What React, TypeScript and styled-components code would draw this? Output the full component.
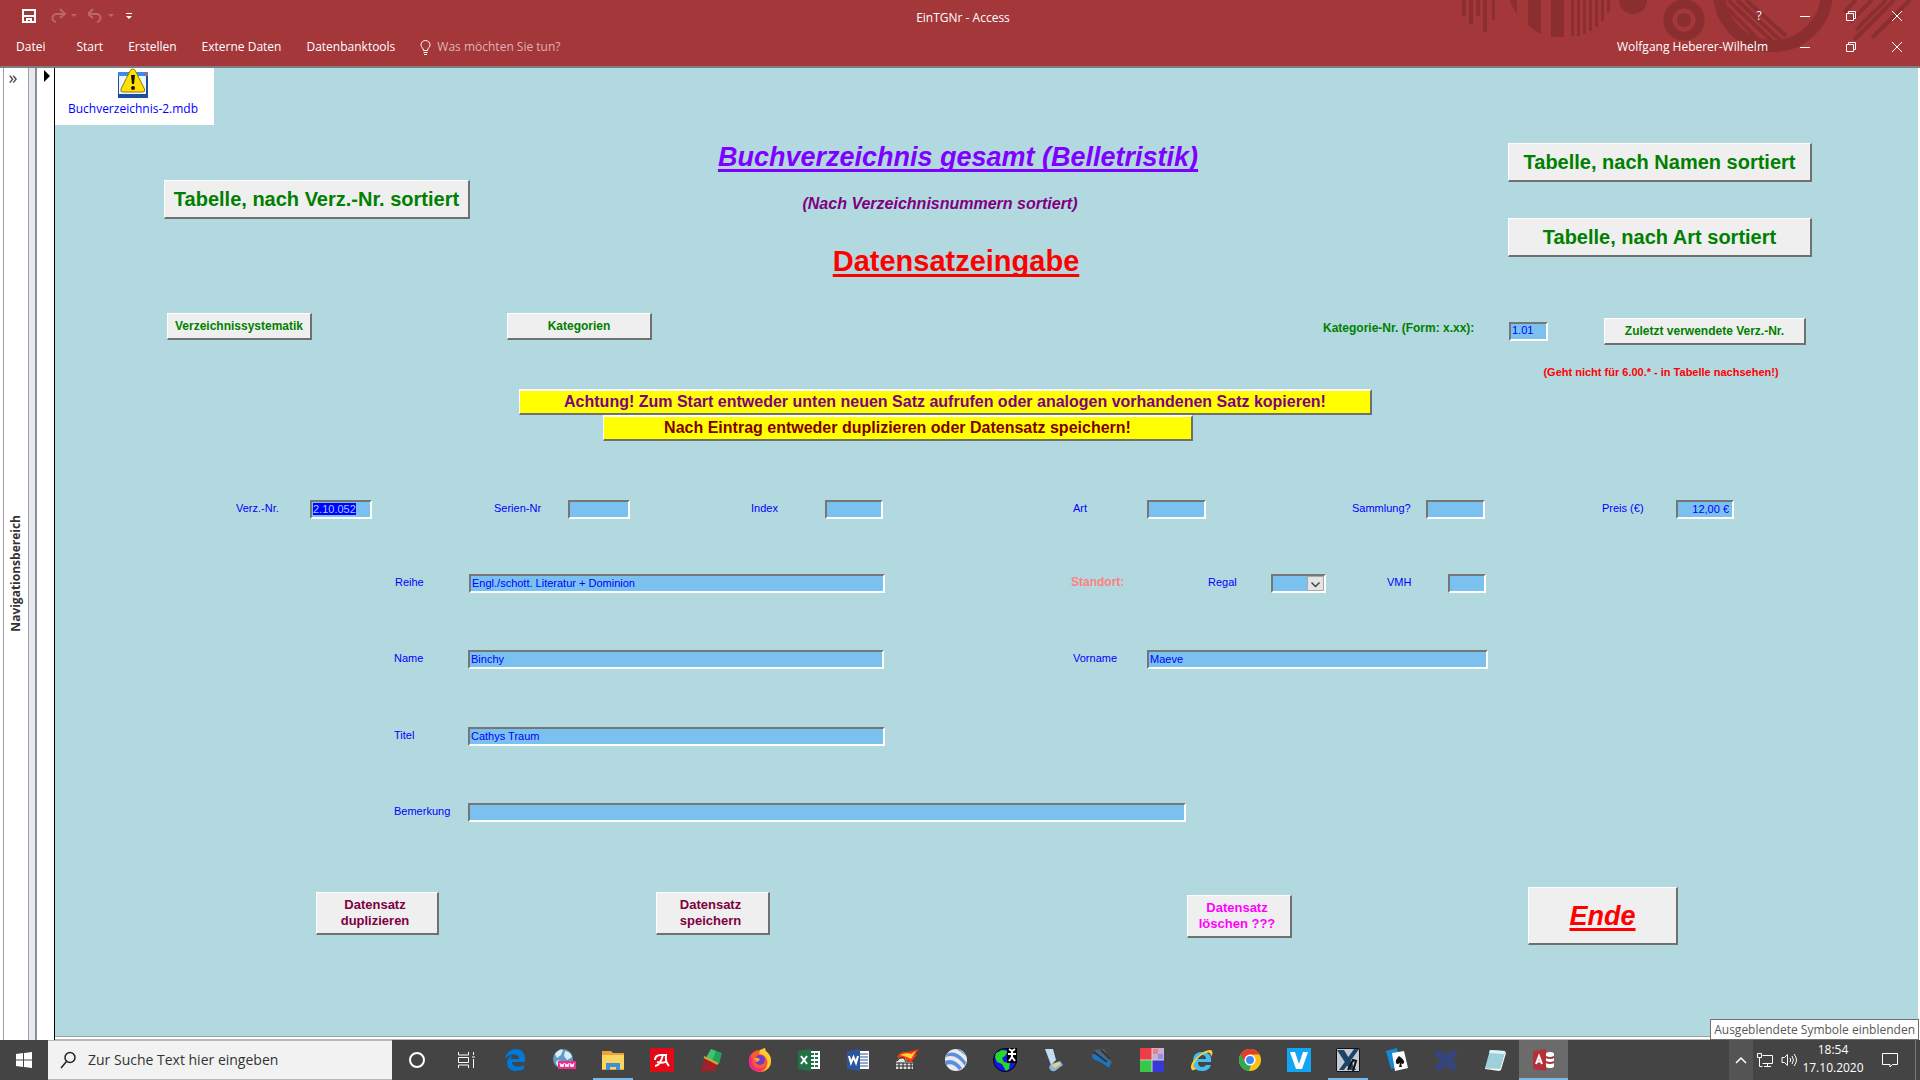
import React, { useEffect, useRef } from "react";
import styled, { createGlobalStyle } from "styled-components";

const ui = `"Open Sans", "Noto Sans", sans-serif`;
const form = `"Liberation Sans", Arial, sans-serif`;

const GlobalStyle = createGlobalStyle`
  * { box-sizing: border-box; }
  body { margin: 0; background: #fff; font-family: ${ui}; }
  button, input, select { font: inherit; }
  h1, h2, p { margin: 0; }
  svg { display: block; flex: none; }
`;

const Shell = styled.div`
  display: flex;
  flex-direction: column;
  min-height: 100vh;
`;

/* ---------- ribbon ---------- */

const Ribbon = styled.header`
  position: relative;
  background: #a4373a;
  color: #fff;
  font-size: 12px;
  line-height: 16px;
  height: 66px;
  overflow: hidden;
`;

const RibbonArt = styled.svg`
  position: absolute;
  top: 0;
  right: 0;
`;

const TitleBar = styled.div`
  position: relative;
  display: grid;
  grid-template-columns: 1fr auto 1fr;
  align-items: center;
  height: 32px;
  padding: 0 14px 0 20px;
`;

const AppTitle = styled.span`
  padding-top: 4px;
`;

const TabBar = styled.nav`
  position: relative;
  display: flex;
  align-items: center;
  height: 30px;
  padding: 0 14px 0 16px;
  gap: 25px;
`;

const QuickAccess = styled.div`
  display: flex;
  align-items: center;
  gap: 10px;
`;

const IconButton = styled.button`
  display: flex;
  align-items: center;
  justify-content: center;
  gap: 4px;
  border: 0;
  padding: 0;
  background: none;
  color: inherit;
`;

const WindowButtons = styled.div`
  display: flex;
  justify-content: flex-end;
  align-items: center;
  gap: 28px;

  ${IconButton} {
    width: 18px;
    height: 18px;
  }
`;

const Tab = styled.button`
  border: 0;
  padding: 0;
  background: none;
  color: #fff;
`;

const FileTab = styled(Tab)`
  padding-right: 6px;
`;

const TellMe = styled.label`
  display: flex;
  align-items: center;
  gap: 6px;
  flex: 1;

  input {
    width: 160px;
    border: 0;
    padding: 0;
    outline: 0;
    background: none;
    color: #fff;
  }
  input::placeholder {
    color: #dfb2b3;
    opacity: 1;
  }
`;

/* ---------- work area ---------- */

const Workspace = styled.div`
  display: flex;
  flex: 1;
  border-top: 2px solid #7d7f80;
  padding-right: 2px;
`;

const NavigationPane = styled.aside`
  display: flex;
  flex-direction: column;
  align-items: center;
  width: 26px;
  margin-left: 3px;
  border-left: 1px solid #a0a0a8;
  border-right: 1px solid #a0a0a8;
  color: #333;
`;

const ExpandButton = styled.button`
  width: 100%;
  height: 38px;
  border: 0;
  padding: 0 6px 20px 0;
  background: none;
  color: #444;
  font-size: 18px;
  line-height: 16px;
`;

const VerticalCaption = styled.span`
  margin: auto 0;
  writing-mode: vertical-rl;
  transform: rotate(180deg);
  font-size: 12px;
  line-height: 16px;
  font-weight: 700;
`;

const Splitter = styled.div`
  width: 8px;
  background: #e6e9f0;
  border-right: 2px solid #8a8d92;
`;

const RecordSelector = styled.div`
  width: 18px;
  padding: 2px 0 0 7px;
  background: #fff;
  border-right: 1px solid #000;
`;

const FormColumn = styled.div`
  display: flex;
  flex-direction: column;
  flex: 1;
  min-width: 0;
`;

const FormArea = styled.main`
  flex: 1;
  background: #b2d9e0;
  color: #0000ff;
  font-family: ${form};
  font-size: 11px;
  line-height: 16px;
`;

const StatusEdge = styled.div`
  height: 4px;
  border-top: 1px solid #a0a0a0;
  border-bottom: 1px solid #b8b8b8;
  background: #fff;
`;

const LinkedFile = styled.div`
  display: flex;
  flex-direction: column;
  align-items: center;
  justify-content: space-between;
  width: 159px;
  height: 57px;
  padding: 0 3px 8px 0;
  background: #fff;
  font-family: ${ui};
  font-size: 12px;
  line-height: 16px;
`;

const Row = styled.div<{ $cols: string; $top: number }>`
  display: grid;
  grid-template-columns: ${(p) => p.$cols};
  align-items: start;
  margin-top: ${(p) => p.$top}px;
`;

const Stack = styled.div<{ $gap: number }>`
  display: flex;
  flex-direction: column;
  gap: ${(p) => p.$gap}px;
`;

const Centered = styled.div<{ $height: number }>`
  display: flex;
  align-items: center;
  height: ${(p) => p.$height}px;
`;

const RaisedButton = styled.button`
  width: 100%;
  padding: 0;
  background: #efefef;
  border-style: solid;
  border-width: 1px 2px 2px 1px;
  border-color: #fff #707070 #707070 #fff;
  font-weight: 700;
  white-space: nowrap;
`;

const TableButton = styled(RaisedButton)`
  height: 39px;
  color: #008000;
  font-size: 20px;
  line-height: 24px;
`;

const SmallButton = styled(RaisedButton)`
  height: 27px;
  color: #008000;
  font-size: 12px;
  line-height: 16px;
`;

const ActionButton = styled(RaisedButton)<{ $color: string }>`
  height: 43px;
  padding-right: 4px;
  color: ${(p) => p.$color};
  font-size: 13px;
  line-height: 16px;
`;

const ExitButton = styled(RaisedButton)`
  height: 58px;
  color: #ff0000;
  font-size: 27px;
  line-height: 32px;
  font-style: italic;
  text-decoration: underline;
  text-decoration-thickness: 3px;
  text-decoration-skip-ink: none;
  text-underline-offset: 3px;
`;

const Titles = styled.div`
  display: flex;
  flex-direction: column;
  align-items: center;
  white-space: nowrap;
  text-decoration-skip-ink: none;
  text-underline-offset: 3px;
`;

const Title = styled.h1`
  color: #8000ff;
  font-size: 27px;
  line-height: 28px;
  font-style: italic;
  text-decoration: underline;
  text-decoration-thickness: 3px;
`;

const Subtitle = styled.p`
  margin-top: 23px;
  padding-right: 36px;
  color: #800080;
  font-size: 16px;
  line-height: 20px;
  font-weight: 700;
  font-style: italic;
`;

const Mode = styled.h2`
  margin-top: 31px;
  padding-right: 4px;
  color: #ff0000;
  font-size: 29px;
  line-height: 32px;

  span {
    text-decoration: underline;
    text-decoration-thickness: 3px;
  }
`;

const Notice = styled.p<{ $color: string }>`
  height: 26px;
  background: #ffff00;
  border-style: solid;
  border-width: 2px 2px 2px 1px;
  border-color: #fff #707070 #707070 #fff;
  color: ${(p) => p.$color};
  font-size: 16px;
  line-height: 22px;
  font-weight: 700;
  text-align: center;
  white-space: nowrap;
`;

const Hint = styled.p`
  color: #ff0000;
  font-size: 11px;
  line-height: 14px;
  font-weight: 700;
  text-align: center;
  white-space: nowrap;
`;

const Label = styled.label<{ $tone?: string; $bold?: boolean }>`
  color: ${(p) => p.$tone ?? "#0000ff"};
  font-size: ${(p) => (p.$bold ? 12 : 11)}px;
  font-weight: ${(p) => (p.$bold ? 700 : 400)};
  white-space: nowrap;
`;

const Field = styled.input<{ $right?: boolean }>`
  width: 100%;
  min-width: 0;
  height: 19px;
  padding: ${(p) => (p.$right ? "0 3px 2px" : "0 1px 2px")};
  background: #7ac1f0;
  border: 2px solid;
  border-color: #767676 #fff #fff #767676;
  border-radius: 0;
  outline: 0;
  color: #0000ff;
  text-align: ${(p) => (p.$right ? "right" : "left")};

  &::selection {
    background: #0000ff;
    color: #a0d4ff;
  }
`;

const SelectBox = styled.div`
  display: flex;
  align-items: center;
  position: relative;
  height: 19px;
  background: #7ac1f0;
  border: 2px solid;
  border-color: #767676 #fff #fff #767676;

  select {
    appearance: none;
    width: 100%;
    height: 15px;
    padding: 0;
    border: 0;
    background: none;
    color: #0000ff;
  }
  svg {
    position: absolute;
    right: 0;
    top: 0;
    pointer-events: none;
  }
`;

/* ---------- taskbar ---------- */

const Taskbar = styled.footer`
  display: flex;
  height: 40px;
  background: #444;
  color: #fff;
`;

const StartButton = styled(IconButton)`
  width: 48px;
`;

const SearchBox = styled.label`
  display: flex;
  align-items: center;
  gap: 12px;
  width: 344px;
  padding-left: 12px;
  background: #f2f2f2;
  border: 1px solid #b8b8b8;
  border-width: 1px 0;

  input {
    flex: 1;
    min-width: 0;
    border: 0;
    padding: 0;
    outline: 0;
    background: none;
    font-size: 14px;
    line-height: 20px;
  }
  input::placeholder {
    color: #333;
    opacity: 1;
  }
`;

const TaskButton = styled(IconButton)<{ $open?: boolean; $active?: boolean }>`
  width: 49px;
  background: ${(p) => (p.$active ? "#6b6b6b" : "transparent")};
  background-image: ${(p) => (p.$open || p.$active ? "linear-gradient(#76b9ed, #76b9ed)" : "none")};
  background-repeat: no-repeat;
  background-position: center bottom;
  background-size: ${(p) => (p.$active ? "100%" : "40px")} 2px;
`;

const Tray = styled.div`
  position: relative;
  display: flex;
  margin-left: auto;
`;

const TrayButton = styled(IconButton)<{ $width: number; $hover?: boolean }>`
  width: ${(p) => p.$width}px;
  background: ${(p) => (p.$hover ? "#545454" : "none")};
`;

const Clock = styled.time`
  width: 64px;
  padding-top: 1px;
  text-align: center;
  font-size: 12px;
  line-height: 18px;
`;

const ShowDesktop = styled.button`
  width: 5px;
  padding: 0;
  border: 0;
  border-left: 1px solid #777;
  background: none;
`;

const Tooltip = styled.div`
  position: absolute;
  right: 1px;
  bottom: 40px;
  padding: 1px 3px;
  background: #fff;
  border: 1px solid #707070;
  color: #575757;
  font-size: 12px;
  line-height: 17px;
  white-space: nowrap;
`;

/* ---------- drawings ---------- */

const Minimize = () => (
  <svg width="10" height="10"><path d="M0 5.5h10" stroke="#fff" /></svg>
);
const Restore = () => (
  <svg width="10" height="10" fill="none" stroke="#fff">
    <path d="M.5 2.5h7v7h-7zM2.5 2.5v-2h7v7h-2" />
  </svg>
);
const Close = () => (
  <svg width="10" height="10"><path d="M0 0l10 10M10 0L0 10" stroke="#fff" /></svg>
);

const Pattern = () => (
  <RibbonArt width="480" height="66" fill="#8a2e30" aria-hidden="true">
    <path d="M22 0h4v16h-4zM29 0h4v24h-4zM36 0h4v16h-4zM43 0h4v32h-4zM52 0h3v20h-3z" />
    <path d="M70 0h7v14q-5-7-7-14zM88 0h13v34q-7-3-13-9zM111 0h13v37h-13zM131 0h3v36h-3zM137 0h3v36h-3zM143 0h3v34h-3zM149 0h3v31h-3zM155 0h3v27h-3zM161 0h3v21h-3zM167 0h3v12h-3z" />
    <path d="M179 0h28a14 14 0 0 1-28 0z" />
    <circle cx="244" cy="20" r="16" fill="none" stroke="#8a2e30" strokeWidth="9" />
    <circle cx="244" cy="20" r="7" />
    <path d="M279-8a54 54 0 0 0 108 0" fill="none" stroke="#8a2e30" strokeWidth="12" />
    <path d="M287 8l39 39M288 0l47 44M297 0l45 42M306 0l40 36" stroke="#8a2e30" strokeWidth="4" />
    <path d="M404 12l12-12M410 22l22-22M416 30l30-30M414 40l40-40M432 38l38-38" stroke="#8a2e30" strokeWidth="4" />
  </RibbonArt>
);

const TellMeBulb = () => (
  <svg width="11" height="15" fill="none" stroke="#fff">
    <path d="M3.5 10.5C3.5 8 1 7.5 1 4.8a4.5 4.3 0 0 1 9 0C10 7.500 7.500 8 7.500 10.500zM3.500 12.500h4M4 14.500h3" />
  </svg>
);

const FileIcon = () => (
  <svg width="32" height="31">
    <path d="M1 4h30v26H1z" fill="#1c4fa0" />
    <path d="M2 8h27v18H2z" fill="#eef5ff" />
    <path d="M1 4h30v4H1z" fill="#3b8be8" />
    <path d="M27 5h3v2h-3z" fill="#e8502a" />
    <path d="M15.500 1q2 0 3 2l9 18q1 3-2 3H6q-3 0-2-3l9-18q1-2 2.500-2z" fill="#ffe000" stroke="#8c7a00" />
    <path d="M14 7h4l-1 9h-2z" fill="#111" />
    <circle cx="16" cy="20" r="2" fill="#111" />
  </svg>
);

const icons: Record<string, React.ReactNode> = {
  cortana: <circle cx="12" cy="12" r="7" fill="none" stroke="#fff" strokeWidth="2" />,
  taskview: (
    <path d="M4.500 4v3h10V4M4.500 20v-3h10v3M4.500 9.500h10v5h-10zM19.500 4v3M19.500 11v9M18 9h3" fill="none" stroke="#fff" />
  ),
  edge: (
    <path d="M2 11C3 4 8 1 13 1c6 0 9 5 9 9v4H9c0 5 7 6 12 3v4c-8 4-17 2-17-6 0-4 3-7 6-8-2 1-2 3-2 4h8c0-6-9-6-14 0z" fill="#0078d7" />
  ),
  web: (
    <>
      <circle cx="11" cy="11" r="10" fill="#5f9cc5" />
      <path d="M3 6q5-6 8-4l-2 5-4 3zM13 3q6 1 7 6l-5 3-3-4zM6 12l5 2-2 6q-5-2-5-6z" fill="#dcecf6" />
      <path d="M6 13h18v8H6z" fill="#ec2d8d" />
      <path d="M8 15l1 4 1-3 1 3 1-4M13 15l1 4 1-3 1 3 1-4M18 15l1 4 1-3 1 3 1-4" stroke="#fff" fill="none" />
    </>
  ),
  explorer: (
    <>
      <path d="M1 4V3h9l2 2h11v17H1z" fill="#e8a33d" />
      <path d="M1 7h22v14H1z" fill="#fcd462" />
      <path d="M5 22v-7h14v7h-4v-3H9v3z" fill="#3f8fd8" />
    </>
  ),
  avira: (
    <>
      <path d="M0 0h24v24H0z" fill="#e20a16" />
      <path d="M5 18q5 0 8-11M5 12q0-5 6-5h5q-1 7 3 11M7 14q6 2 10-1" fill="none" stroke="#fff" strokeWidth="2" />
    </>
  ),
  brush: (
    <>
      <path d="M12 1l11 4-3 11-13-6z" fill="#23a455" />
      <path d="M12 1l5 2-4 10-6-3z" fill="#3cc474" />
      <path d="M6 11l13 5-3 7H1z" fill="#a3202a" />
      <path d="M5 9l14 7" stroke="#e0a030" strokeWidth="2" />
    </>
  ),
  firefox: (
    <>
      <circle cx="12" cy="13" r="11" fill="#ff5a2c" />
      <path d="M12 2q4-2 5-2 0 3 3 5 3 3 3 8 0 8-9 11 7-5 5-12-2-6-8-6z" fill="#ffc933" />
      <path d="M2 6q0 3 3 4-2 5 1 8 5 5 12 0-4 6-10 5-7-1-7-9 0-5 1-8z" fill="#f0288a" />
      <circle cx="12" cy="12" r="5" fill="#6a3dcc" />
      <path d="M6 10q4-1 6 1-1 3-4 3z" fill="#ffa030" />
    </>
  ),
  excel: (
    <>
      <path d="M12 3h11v18H12z" fill="#fff" />
      <path d="M14 5h3v2h-3zM18 5h3v2h-3zM14 9h3v2h-3zM18 9h3v2h-3zM14 13h3v2h-3zM18 13h3v2h-3zM14 17h3v2h-3zM18 17h3v2h-3z" fill="#217346" />
      <path d="M1 3l13-2v22L1 21z" fill="#217346" />
      <path d="M4 8l6 8M10 8l-6 8" stroke="#fff" strokeWidth="2" />
    </>
  ),
  word: (
    <>
      <path d="M12 3h11v18H12z" fill="#fff" />
      <path d="M14 6h8M14 9h8M14 12h8M14 15h8M14 18h8" stroke="#2b579a" />
      <path d="M1 3l13-2v22L1 21z" fill="#2b579a" />
      <path d="M3 8l2 7 2.500-6L10 15l2-7" stroke="#fff" strokeWidth="2" fill="none" />
    </>
  ),
  flame: (
    <>
      <path d="M2 9q3-6 11-5l11-3-4 6h2l-5 6 1 3-8-4z" fill="#f03a12" />
      <path d="M5 7q6-3 11-1l5-3-5 8-4-2z" fill="#ffd53a" />
      <path d="M1 14l3-4h6l2 4h6v7H1z" fill="#ddd" />
      <path d="M1 15h17M1 18h17M4 15v7M8 15v7M12 15v7M16 15v7M2 13l3-3h4l2 4" stroke="#222" fill="none" />
    </>
  ),
  earth: (
    <>
      <circle cx="12" cy="12" r="11" fill="#e8eaed" />
      <path d="M3 6q9-5 19 8l-1 4Q12 5 2 9zM1 13q9-4 17 7l-3 2Q9 14 2 17zM12 1q7 1 10 7-4-4-10-7z" fill="#5a8fe0" />
    </>
  ),
  globe: (
    <>
      <circle cx="12" cy="12" r="11.500" fill="#1515e8" stroke="#000" />
      <path d="M3 5l6-3 6 1-3 5-3 2 2 4 6 1-1 6-3 2-4-7-5-2-2-5z" fill="#28d828" />
      <path d="M14 0h10v15H14z" fill="#000" />
      <path d="M16 1l3 2 3-2M15 6h8M19 3v6l-3 4M19 9l3 4" stroke="#fff" strokeWidth="2" fill="none" />
    </>
  ),
  scanner: (
    <>
      <path d="M3 1h8l3 11-5 5z" fill="#c4dcf6" />
      <path d="M9 16l9-3 3 4-8 6q-5 1-6-4z" fill="#8fb4dc" />
      <path d="M9 17l8-3 2 2-6 4z" fill="#d8d48a" />
    </>
  ),
  tool: (
    <>
      <path d="M3 2l10-1 8 14-6 1z" fill="#59636c" />
      <path d="M1 6l9 1 10 8-2 5-7-5-9-4z" fill="#1b76c2" />
      <path d="M3 4l13 10M10 2l9 9" stroke="#26394a" strokeWidth="2" />
    </>
  ),
  tiles: (
    <>
      <path d="M0 0h12v12H0z" fill="#f03c46" />
      <path d="M12 0h12v12H12z" fill="#c8b0d8" />
      <path d="M13 1h5v5h-5z" fill="#f08080" />
      <path d="M18 6h5v5h-5z" fill="#9090e8" />
      <path d="M0 12h12v12H0z" fill="#38c848" />
      <path d="M12 12h12v12H12z" fill="#3838d8" />
      <path d="M12 0v24M0 12h24" stroke="#ccc" />
    </>
  ),
  ie: (
    <>
      <path d="M22 14H9q0 5 4 5 3 0 4-2h5q-2 6-9 6-9 0-9-10 0-9 9-9 10 0 9 10zM9 11h8q0-4-4-4t-4 4z" fill="#45bdf0" />
      <path d="M3 22q-4-5 6-14 8-7 13-6 3 2 0 7 0-6-5-4Q9 8 5 16q-1 4 3 4-3 3-5 2z" fill="#f7cf3d" />
    </>
  ),
  chrome: (
    <>
      <circle cx="12" cy="12" r="11" fill="#fbc116" />
      <path d="M2.500 6.500A11 11 0 0 1 21.500 6.500H12L7 15z" fill="#e33b2e" />
      <path d="M2.500 6.500L8 15l5 2-2 6A11 11 0 0 1 2.500 6.500z" fill="#2da94f" />
      <circle cx="12" cy="12" r="5.500" fill="#fff" />
      <circle cx="12" cy="12" r="4" fill="#4285f4" />
    </>
  ),
  v: (
    <>
      <path d="M0 0h24v24H0z" fill="#12a5f4" />
      <path d="M3 4h5l4 12 4-12h5l-6 17H9z" fill="#fff" />
    </>
  ),
  x: (
    <>
      <path d="M0 0h24v24H0z" fill="#c4cbd2" />
      <path d="M1 2h7l12 20h-6zM18 1h5L8 22H3z" fill="#1d4468" />
      <path d="M12 22l5-10 3 1-3 10" fill="none" stroke="#111" strokeWidth="2" />
      <path d="M.5.5h23v23H.5z" fill="none" stroke="#111" />
    </>
  ),
  cards: (
    <>
      <path d="M1 3l11-3 4 19-10 2z" fill="#1787d8" />
      <path d="M7 5l12-2 4 17-13 3z" fill="#fff" />
      <path d="M14 8q6 4 5 7-2 2-3 0l1 4h-3l1-4q-3 2-4 0-1-3 3-7z" fill="#111" />
    </>
  ),
  butterfly: (
    <path d="M1 3q8-3 10 7V3h2v7q2-10 10-7 1 6-6 9 6 3 6 10-8 2-10-7v6h-2v-6q-2 9-10 7 0-7 6-10-7-3-6-9z" fill="#36457e" />
  ),
  notepad: (
    <>
      <path d="M7 2l15 1-5 19-15-2z" fill="#9ed0dc" />
      <path d="M7 2l15 1-1 3-15-1z" fill="#dff2f6" />
      <path d="M22 3l1 2-5 17-2 1-14-2v-1l15 1z" fill="#f4f4f4" />
    </>
  ),
  access: (
    <>
      <path d="M14 6q0-2 4-2t4 2v12q0 2-4 2t-4-2z" fill="#fff" />
      <path d="M14 9q4 2 8 0M14 14q4 2 8 0" stroke="#a4373a" strokeWidth="2" fill="none" />
      <path d="M1 3l13-2v22L1 21z" fill="#b5313a" />
      <path d="M4 16l3-8 3 8M5 13.500h4" stroke="#fff" strokeWidth="2" fill="none" />
    </>
  ),
};

const tasks: { icon: string; name: string; open?: boolean; active?: boolean }[] = [
  { icon: "cortana", name: "Cortana" },
  { icon: "taskview", name: "Aktive Anwendungen" },
  { icon: "edge", name: "Edge" },
  { icon: "web", name: "Internet" },
  { icon: "explorer", name: "Explorer", open: true },
  { icon: "avira", name: "Avira" },
  { icon: "brush", name: "Pinsel" },
  { icon: "firefox", name: "Firefox" },
  { icon: "excel", name: "Excel" },
  { icon: "word", name: "Word" },
  { icon: "flame", name: "Brenner" },
  { icon: "earth", name: "Earth" },
  { icon: "globe", name: "Globus" },
  { icon: "scanner", name: "Scanner" },
  { icon: "tool", name: "Werkzeug" },
  { icon: "tiles", name: "Kacheln" },
  { icon: "ie", name: "Internet Explorer" },
  { icon: "chrome", name: "Chrome" },
  { icon: "v", name: "V" },
  { icon: "x", name: "X", open: true },
  { icon: "cards", name: "Solitaire" },
  { icon: "butterfly", name: "Schmetterling" },
  { icon: "notepad", name: "Editor" },
  { icon: "access", name: "Access", active: true },
];

type TextFieldProps = {
  id: string;
  label: string;
  value?: string;
  right?: boolean;
  inputRef?: React.Ref<HTMLInputElement>;
};

const TextField = ({ id, label, value, right, inputRef }: TextFieldProps) => (
  <>
    <Label htmlFor={id}>{label}</Label>
    <Field id={id} defaultValue={value} $right={right} ref={inputRef} />
    <span />
  </>
);

const WindowControls = () => (
  <>
    <IconButton aria-label="Minimieren"><Minimize /></IconButton>
    <IconButton aria-label="Wiederherstellen"><Restore /></IconButton>
    <IconButton aria-label="Schließen"><Close /></IconButton>
  </>
);

export default function App() {
  const first = useRef<HTMLInputElement>(null);

  useEffect(() => {
    first.current?.focus();
    first.current?.select();
  }, []);

  return (
    <Shell>
      <GlobalStyle />
      <Ribbon>
        <Pattern />
        <TitleBar>
          <QuickAccess>
            <IconButton aria-label="Speichern">
              <svg width="20" height="16" fill="none" stroke="#fff" strokeWidth="2">
                <path d="M3 2h12v12H3zM3 8h12M7 14v-3h4v3" />
              </svg>
            </IconButton>
            <IconButton aria-label="Wiederholen">
              <svg width="28" height="16" fill="none" stroke="#bd6669" strokeWidth="2">
                <path d="M14 6H7a4 4 0 0 0-1 8M10 1l5 5-5 4" />
                <path d="M21 6h6l-3 3z" fill="#bd6669" stroke="none" />
              </svg>
            </IconButton>
            <IconButton aria-label="Rückgängig">
              <svg width="28" height="16" fill="none" stroke="#bd6669" strokeWidth="2">
                <path d="M1 6h7a4 4 0 0 1 1 8M5 1L0 6l5 4" />
                <path d="M20 6h6l-3 3z" fill="#bd6669" stroke="none" />
              </svg>
            </IconButton>
            <IconButton aria-label="Symbolleiste anpassen">
              <svg width="6" height="8" fill="#fff"><path d="M0 1h6v1H0zM0 4h6L3 7z" /></svg>
            </IconButton>
          </QuickAccess>
          <AppTitle>EinTGNr - Access</AppTitle>
          <WindowButtons>
            <IconButton aria-label="Hilfe">?</IconButton>
            <WindowControls />
          </WindowButtons>
        </TitleBar>
        <TabBar>
          <FileTab>Datei</FileTab>
          <Tab>Start</Tab>
          <Tab>Erstellen</Tab>
          <Tab>Externe Daten</Tab>
          <Tab>Datenbanktools</Tab>
          <TellMe>
            <TellMeBulb />
            <input aria-label="Was möchten Sie tun?" placeholder="Was möchten Sie tun?" />
          </TellMe>
          <WindowButtons>
            <span>Wolfgang Heberer-Wilhelm</span>
            <WindowControls />
          </WindowButtons>
        </TabBar>
      </Ribbon>

      <Workspace>
        <NavigationPane>
          <ExpandButton aria-label="Navigationsbereich öffnen">»</ExpandButton>
          <VerticalCaption>Navigationsbereich</VerticalCaption>
        </NavigationPane>
        <Splitter />
        <RecordSelector>
          <svg width="7" height="12"><path d="M0 0l6 6-6 6z" /></svg>
        </RecordSelector>
        <FormColumn>
          <FormArea>
            <LinkedFile>
              <FileIcon />
              <span>Buchverzeichnis-2.mdb</span>
            </LinkedFile>

            <Row $top={18} $cols="109fr 306px 249fr 478px 311fr 304px 106fr">
              <span />
              <Centered $height={113}>
                <TableButton>Tabelle, nach Verz.-Nr. sortiert</TableButton>
              </Centered>
              <span />
              <Titles>
                <Title>Buchverzeichnis gesamt (Belletristik)</Title>
                <Subtitle>(Nach Verzeichnisnummern sortiert)</Subtitle>
                <Mode><span>Datensatzeingabe</span></Mode>
              </Titles>
              <span />
              <Stack $gap={36}>
                <TableButton>Tabelle, nach Namen sortiert</TableButton>
                <TableButton>Tabelle, nach Art sortiert</TableButton>
              </Stack>
            </Row>

            <Row $top={36} $cols="112fr 145px 195fr 145px 671fr 147px 39fr 39px 56fr 202px 112fr">
              <span />
              <SmallButton>Verzeichnissystematik</SmallButton>
              <span />
              <SmallButton>Kategorien</SmallButton>
              <span />
              <Centered $height={30}>
                <Label htmlFor="kategorie" $tone="#008000" $bold>Kategorie-Nr. (Form: x.xx):</Label>
              </Centered>
              <span />
              <Centered $height={36}>
                <Field id="kategorie" defaultValue="1.01" />
              </Centered>
              <span />
              <Centered $height={36}>
                <SmallButton>Zuletzt verwendete Verz.-Nr.</SmallButton>
              </Centered>
            </Row>

            <Row $top={16} $cols="1484fr 244px 135fr">
              <span />
              <Hint>(Geht nicht für 6.00.* - in Tabelle nachsehen!)</Hint>
            </Row>

            <Row $top={10} $cols="464fr 853px 546fr">
              <span />
              <Notice $color="#800080">
                Achtung! Zum Start entweder unten neuen Satz aufrufen oder analogen vorhandenen Satz kopieren!
              </Notice>
            </Row>
            <Row $top={0} $cols="548fr 590px 725fr">
              <span />
              <Notice $color="#800000">Nach Eintrag entweder duplizieren oder Datensatz speichern!</Notice>
            </Row>

            <Row
              $top={59}
              $cols="181fr 74px 62px 122fr 74px 62px 121fr 74px 58px 190fr 74px 59px 146fr 74px 59px 117fr 74px 58px 184fr"
            >
              <span />
              <TextField id="verz" label="Verz.-Nr." value="2.10.052" inputRef={first} />
              <TextField id="serie" label="Serien-Nr" />
              <TextField id="index" label="Index" />
              <TextField id="art" label="Art" />
              <TextField id="sammlung" label="Sammlung?" />
              <TextField id="preis" label="Preis (€)" value="12,00 €" right />
            </Row>

            <Row $top={55} $cols="340fr 74px minmax(0, 416fr) 186fr 52px 85fr 63px 55px 61fr 61px 38px 432fr">
              <span />
              <TextField id="reihe" label="Reihe" value="Engl./schott. Literatur + Dominion" />
              <Label as="span" $tone="#ff8080" $bold>Standort:</Label>
              <span />
              <Label htmlFor="regal">Regal</Label>
              <SelectBox>
                <select id="regal" />
                <svg width="17" height="15">
                  <path d="M.5.5h16v14H.5z" fill="#e4e4e4" stroke="#a8a8a8" />
                  <path d="M4.500 6.500l4 4 4-4" fill="none" stroke="#444" strokeWidth="1.500" />
                </svg>
              </SelectBox>
              <span />
              <TextField id="vmh" label="VMH" />
            </Row>

            <Row $top={57} $cols="339fr 74px minmax(0, 416fr) 189fr 74px minmax(0, 341fr) 430fr">
              <span />
              <TextField id="name" label="Name" value="Binchy" />
              <TextField id="vorname" label="Vorname" value="Maeve" />
            </Row>

            <Row $top={58} $cols="339fr 74px minmax(0, 417fr) 1033fr">
              <span />
              <TextField id="titel" label="Titel" value="Cathys Traum" />
            </Row>

            <Row $top={57} $cols="339fr 74px minmax(0, 718fr) 732fr">
              <span />
              <TextField id="bemerkung" label="Bemerkung" />
            </Row>

            <Row $top={65} $cols="261fr 123px 217fr 114px 417fr 105px 236fr 150px 240fr">
              <span />
              <Centered $height={52}>
                <ActionButton $color="#800040">Datensatz<br />duplizieren</ActionButton>
              </Centered>
              <span />
              <Centered $height={52}>
                <ActionButton $color="#800040">Datensatz<br />speichern</ActionButton>
              </Centered>
              <span />
              <Centered $height={58}>
                <ActionButton $color="#ff00ff">Datensatz<br />löschen ???</ActionButton>
              </Centered>
              <span />
              <ExitButton>Ende</ExitButton>
            </Row>
          </FormArea>
          <StatusEdge />
        </FormColumn>
      </Workspace>

      <Taskbar>
        <StartButton aria-label="Start">
          <svg width="16" height="16" fill="#fff">
            <path d="M0 2l7-1v6.500H0zM8 1l8-1v7.500H8zM0 8.500h7V15l-7-1zM8 8.500h8V16l-8-1z" />
          </svg>
        </StartButton>
        <SearchBox>
          <svg width="16" height="18" fill="none" stroke="#222" strokeWidth="1.500">
            <circle cx="10" cy="6.500" r="5" />
            <path d="M6.500 10.500L1 17" />
          </svg>
          <input aria-label="Suche" placeholder="Zur Suche Text hier eingeben" />
        </SearchBox>
        {tasks.map((t) => (
          <TaskButton key={t.icon} aria-label={t.name} $open={t.open} $active={t.active}>
            <svg width="24" height="24">{icons[t.icon]}</svg>
          </TaskButton>
        ))}
        <Tray>
          <Tooltip role="tooltip">Ausgeblendete Symbole einblenden</Tooltip>
          <TrayButton $width={24} $hover aria-label="Ausgeblendete Symbole einblenden">
            <svg width="12" height="8" fill="none" stroke="#fff" strokeWidth="1.500"><path d="M1 7l5-5 5 5" /></svg>
          </TrayButton>
          <TrayButton $width={24} aria-label="Netzwerk">
            <svg width="16" height="16" fill="none" stroke="#fff">
              <path d="M5.500 3.500h10v8h-10M10.500 11.500v3M7 14.500h7M.5 1.500h4v4h-4zM2.500 5.500v9h3" />
            </svg>
          </TrayButton>
          <TrayButton $width={24} aria-label="Lautstärke">
            <svg width="17" height="16" fill="none" stroke="#fff">
              <path d="M1 5.500h2.500l3-3v11l-3-3H1zM9 6q1.500 2 0 4M11 4q3 4 0 8M13 2q5 6 0 12" />
            </svg>
          </TrayButton>
          <Clock>18:54<br />17.10.2020</Clock>
          <TrayButton $width={50} aria-label="Benachrichtigungen">
            <svg width="16" height="16" fill="none" stroke="#fff">
              <path d="M.5 1.500h15v11h-5l-2.500 2.500v-2.500H.5z" />
            </svg>
          </TrayButton>
          <ShowDesktop aria-label="Desktop anzeigen" />
        </Tray>
      </Taskbar>
    </Shell>
  );
}
